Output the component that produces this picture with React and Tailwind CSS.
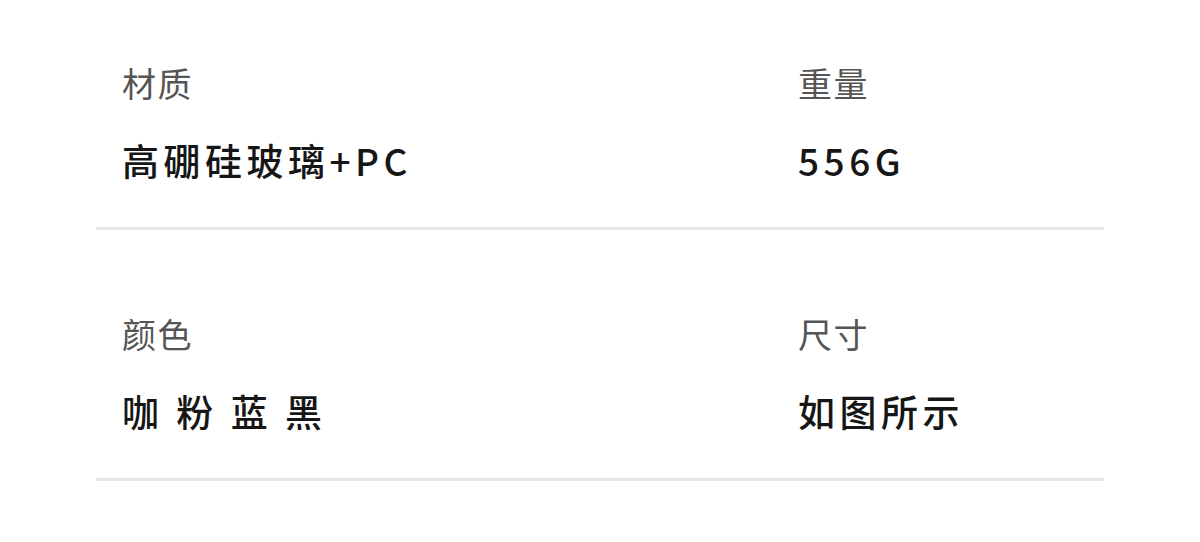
import React from "react";

const specs = [
  [
    { label: "材质", value: "高硼硅玻璃+PC" },
    { label: "重量", value: "556G" },
  ],
  [
    { label: "颜色", value: "咖 粉 蓝 黑" },
    { label: "尺寸", value: "如图所示" },
  ],
];

const SpecCell = ({ label, value }) => (
  <div className="flex flex-col">
    <span className="text-[34px] leading-none tracking-[1.5px] text-[#555555]">{label}</span>
    <span className="mt-[42px] text-[37px] leading-none font-medium tracking-[4.5px] text-[#161616]">
      {value}
    </span>
  </div>
);

const App = () => {
  return (
    <div
      className="w-[1200px] h-[542px] bg-white overflow-hidden"
      style={{ fontFamily: '"Noto Sans CJK SC", "Noto Sans", sans-serif' }}
    >
      <div className="ml-[96px] w-[1008px]">
        {specs.map((row, i) => (
          <div key={i} className={i === 0 ? "pt-[66px]" : "pt-[87px]"}>
            <div className="grid grid-cols-[676px_1fr] pl-[26px]">
              {row.map((cell) => (
                <SpecCell key={cell.label} {...cell} />
              ))}
            </div>
            <div className="mt-[48px] h-[3px] bg-[#e6e6e6]" />
          </div>
        ))}
      </div>
    </div>
  );
};

export default App;
